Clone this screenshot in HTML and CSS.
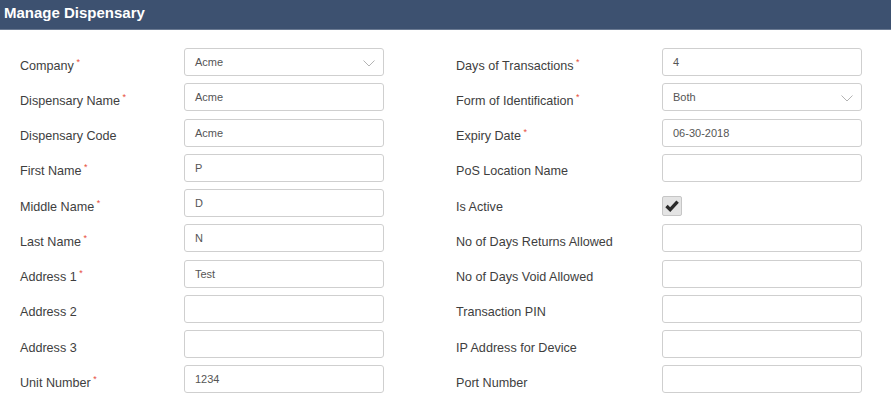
FILE: index.html
```html
<!DOCTYPE html>
<html>
<head>
<meta charset="utf-8">
<link rel="stylesheet" href="styles.css">
</head>
<body>
<div class="header">Manage Dispensary</div>
<div class="form">
  <div class="col col-left">
    <label class="lbl">Company <span class="req">*</span></label>
    <div class="field select">Acme<svg class="chev" viewBox="0 0 12 7" width="12" height="7"><path d="M0.5 0.5 L6 6 L11.5 0.5" fill="none" stroke="#b3b3b3" stroke-width="1"/></svg></div>
    <label class="lbl">Dispensary Name <span class="req">*</span></label>
    <div class="field">Acme</div>
    <label class="lbl">Dispensary Code</label>
    <div class="field">Acme</div>
    <label class="lbl">First Name <span class="req">*</span></label>
    <div class="field">P</div>
    <label class="lbl">Middle Name <span class="req">*</span></label>
    <div class="field">D</div>
    <label class="lbl">Last Name <span class="req">*</span></label>
    <div class="field">N</div>
    <label class="lbl">Address 1 <span class="req">*</span></label>
    <div class="field">Test</div>
    <label class="lbl">Address 2</label>
    <div class="field"></div>
    <label class="lbl">Address 3</label>
    <div class="field"></div>
    <label class="lbl">Unit Number <span class="req">*</span></label>
    <div class="field">1234</div>
  </div>
  <div class="col col-right">
    <label class="lbl">Days of Transactions <span class="req">*</span></label>
    <div class="field">4</div>
    <label class="lbl">Form of Identification <span class="req">*</span></label>
    <div class="field select">Both<svg class="chev" viewBox="0 0 12 7" width="12" height="7"><path d="M0.5 0.5 L6 6 L11.5 0.5" fill="none" stroke="#b3b3b3" stroke-width="1"/></svg></div>
    <label class="lbl">Expiry Date <span class="req">*</span></label>
    <div class="field">06-30-2018</div>
    <label class="lbl">PoS Location Name</label>
    <div class="field"></div>
    <label class="lbl">Is Active</label>
    <div class="check-cell"><span class="checkbox"><svg viewBox="0 0 14 12" width="14" height="12"><path d="M1.5 6 L5.2 9.6 L12.6 1.6" fill="none" stroke="#2b2b2b" stroke-width="3.4" stroke-linejoin="miter"/></svg></span></div>
    <label class="lbl">No of Days Returns Allowed</label>
    <div class="field"></div>
    <label class="lbl">No of Days Void Allowed</label>
    <div class="field"></div>
    <label class="lbl">Transaction PIN</label>
    <div class="field"></div>
    <label class="lbl">IP Address for Device</label>
    <div class="field"></div>
    <label class="lbl">Port Number</label>
    <div class="field"></div>
  </div>
</div>
</body>
</html>
```
FILE: styles.css
```css
html, body {
  margin: 0;
  padding: 0;
  background: #fff;
  font-family: "Liberation Sans", Arial, sans-serif;
}
.header {
  height: 29px;
  background: #3d5170;
  border-bottom: 1px solid #6b7a92;
  color: #fff;
  font-weight: bold;
  font-size: 15px;
  line-height: 26px;
  padding-left: 4px;
}
.form {
  display: flex;
  gap: 72px;
  padding: 18px 0 0 20px;
}
.col {
  display: grid;
  grid-auto-rows: 28px;
  row-gap: 7.25px;
}
.col-left { grid-template-columns: 164px 200px; }
.col-right { grid-template-columns: 206px 200px; }
.lbl {
  font-size: 12.6px;
  color: #3e3e3e;
  padding-top: 10.5px;
  line-height: 15px;
  height: 15px;
  white-space: nowrap;
}
.req {
  color: #e74c3c;
  font-size: 9px;
  line-height: 0;
  position: relative;
  top: -5px;
  margin-left: -1px;
}
.field {
  box-sizing: border-box;
  height: 28px;
  border: 1px solid #cfcfcf;
  border-radius: 3px;
  font-size: 11px;
  color: #555;
  padding: 0 10px;
  line-height: 26px;
  position: relative;
}
.chev {
  position: absolute;
  right: 8px;
  top: 11px;
}
.check-cell {
  display: flex;
  align-items: center;
  padding-top: 6px;
}
.checkbox {
  box-sizing: border-box;
  width: 20px;
  height: 20px;
  background: #e4e4e4;
  border: 1px solid #c6c6c6;
  border-radius: 2px;
  display: flex;
  align-items: center;
  justify-content: center;
}
```
